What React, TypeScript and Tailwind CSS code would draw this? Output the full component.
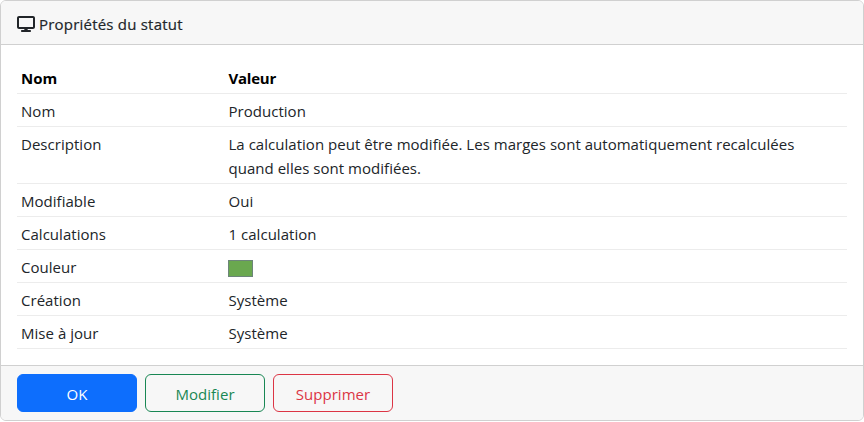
import React from "react";
import { FaDisplay } from "react-icons/fa6";

type Row = { label: string; value: React.ReactNode };

const rows: Row[] = [
  { label: "Nom", value: "Production" },
  {
    label: "Description",
    value: (
      <>
        La calculation peut être modifiée. Les marges sont automatiquement recalculées
        <br />
        quand elles sont modifiées.
      </>
    ),
  },
  { label: "Modifiable", value: "Oui" },
  { label: "Calculations", value: "1 calculation" },
  {
    label: "Couleur",
    value: <div className="mt-[5px] -ml-[0.5px] h-[17px] w-[25px] border border-[#6c8579] bg-[#6aa84f]" />,
  },
  { label: "Création", value: "Système" },
  { label: "Mise à jour", value: "Système" },
];

const button = "h-[38px] w-[120px] rounded-md border pt-[2px] text-center tracking-[0.03px]";

export default function App() {
  return (
    <div className="h-[422px] bg-white font-['Open_Sans','Noto_Sans',sans-serif] text-[15px] leading-6 text-[#212529]">
      <section className="flex h-[421px] flex-col overflow-hidden rounded-md border border-[#d0d0d0] bg-white">
        <header className="flex h-11 shrink-0 items-center gap-1 border-b border-[#d0d0d0] bg-[#f7f7f7] px-4 pt-[3px]">
          <FaDisplay className="h-4 w-[18px]" />
          <h1 className="font-medium tracking-[0.21px] [-webkit-text-stroke:0.2px_#212529]">Propriétés du statut</h1>
        </header>
        <div className="grow px-4 pt-4">
          <div className="flex h-[33px] border-b border-[#ececec] px-1 pt-[5px] font-bold text-black">
            <div className="w-[207.5px]">Nom</div>
            <div className="tracking-[-0.22px]">Valeur</div>
          </div>
          {rows.map((row) => (
            <div key={row.label} className="flex min-h-[33px] border-b border-[#ececec] px-1 pt-[5px] pb-[3px] tracking-[0.03px]">
              <div className="w-[207.5px] shrink-0">{row.label}</div>
              <div className="whitespace-nowrap">{row.value}</div>
            </div>
          ))}
        </div>
        <footer className="flex h-[55px] shrink-0 gap-2 border-t border-[#d0d0d0] bg-[#f7f7f7] px-4 pt-2">
          <button className={`${button} border-[#0d6efd] bg-[#0d6efd] text-white`}>OK</button>
          <button className={`${button} border-[#198754] text-[#198754]`}>Modifier</button>
          <button className={`${button} border-[#dc3545] text-[#dc3545]`}>Supprimer</button>
        </footer>
      </section>
    </div>
  );
}
